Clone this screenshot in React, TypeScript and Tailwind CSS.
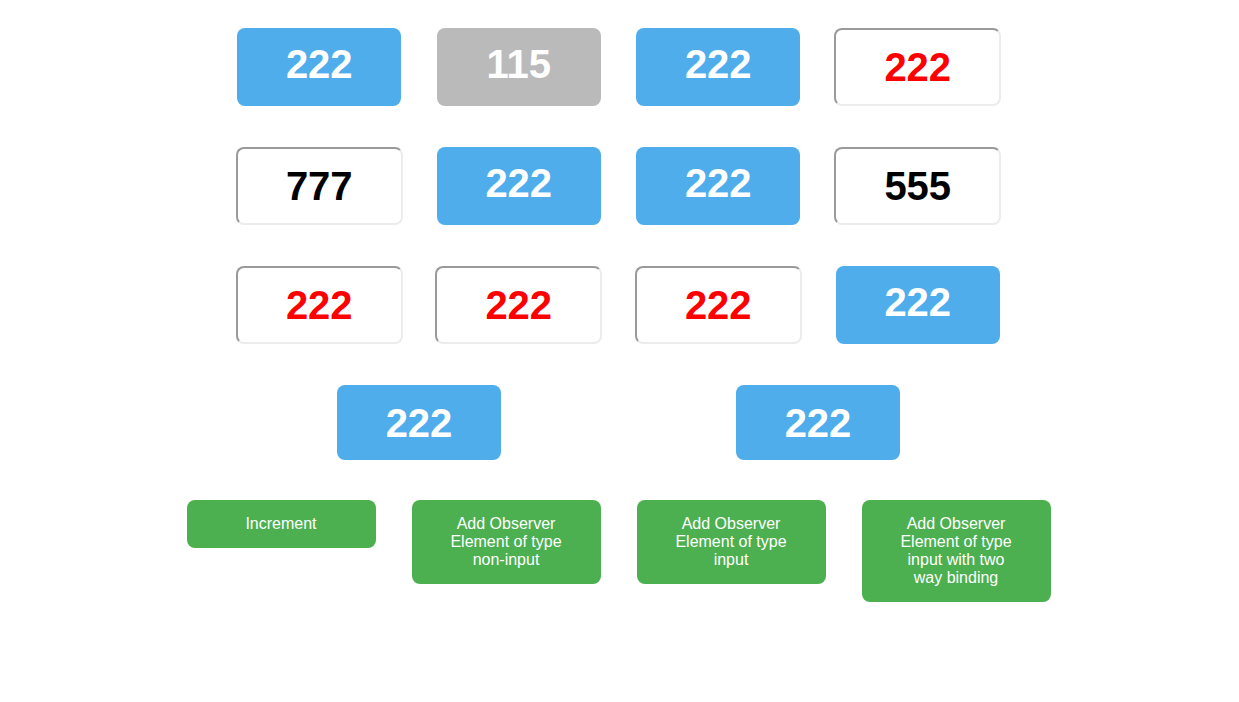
import React from "react";

type Item = { kind: "blue" | "gray" | "input"; value: string; color?: string };

const Box = ({ item }: { item: Item }) => {
  if (item.kind === "input") {
    return (
      <input
        readOnly
        value={item.value}
        className={`w-[167px] h-[78px] rounded-[8px] border-2 border-t-[#9a9a9a] border-l-[#9a9a9a] border-r-[#ececec] border-b-[#ececec] bg-white text-center text-[40px] font-bold outline-none ${
          item.color === "red" ? "text-[#ff0000]" : "text-black"
        }`}
        style={{ fontFamily: '"Liberation Sans", Arial, sans-serif' }}
      />
    );
  }
  return (
    <div
      className={`w-[164px] h-[78px] rounded-[8px] flex items-center justify-center pb-[6px] text-white text-[40px] font-bold ${
        item.kind === "gray" ? "bg-[#bababa]" : "bg-[#4eadea]"
      }`}
    >
      {item.value}
    </div>
  );
};

const rows: Item[][] = [
  [
    { kind: "blue", value: "222" },
    { kind: "gray", value: "115" },
    { kind: "blue", value: "222" },
    { kind: "input", value: "222", color: "red" },
  ],
  [
    { kind: "input", value: "777", color: "black" },
    { kind: "blue", value: "222" },
    { kind: "blue", value: "222" },
    { kind: "input", value: "555", color: "black" },
  ],
  [
    { kind: "input", value: "222", color: "red" },
    { kind: "input", value: "222", color: "red" },
    { kind: "input", value: "222", color: "red" },
    { kind: "blue", value: "222" },
  ],
];

const buttons = [
  "Increment",
  "Add Observer Element of type non-input",
  "Add Observer Element of type input",
  "Add Observer Element of type input with two way binding",
];

export default function App() {
  return (
    <div
      className="w-[1237px] h-[702px] bg-white"
      style={{ fontFamily: '"Liberation Sans", Arial, sans-serif' }}
    >
      <div className="w-[798px] mx-auto pt-[28px] flex flex-col gap-[41px]">
        {rows.map((row, i) => (
          <div key={i} className="grid grid-cols-4">
            {row.map((item, j) => (
              <div key={j} className="flex justify-center">
                <Box item={item} />
              </div>
            ))}
          </div>
        ))}
        <div className="grid grid-cols-2">
          {[0, 1].map((j) => (
            <div key={j} className="flex justify-center">
              <div className="w-[164px] h-[75px] rounded-[8px] flex items-center justify-center bg-[#4eadea] text-white text-[40px] font-bold">
                222
              </div>
            </div>
          ))}
        </div>
      </div>
      <div className="flex justify-center items-start gap-[36px] mt-[40px]">
        {buttons.map((b) => (
          <button
            key={b}
            className="w-[189px] rounded-[8px] bg-[#4caf50] text-white text-[16px] leading-[18px] pt-[15px] pb-[15px] px-[35px] text-center"
            style={{ fontFamily: '"Liberation Sans", Arial, sans-serif' }}
          >
            {b}
          </button>
        ))}
      </div>
    </div>
  );
}
